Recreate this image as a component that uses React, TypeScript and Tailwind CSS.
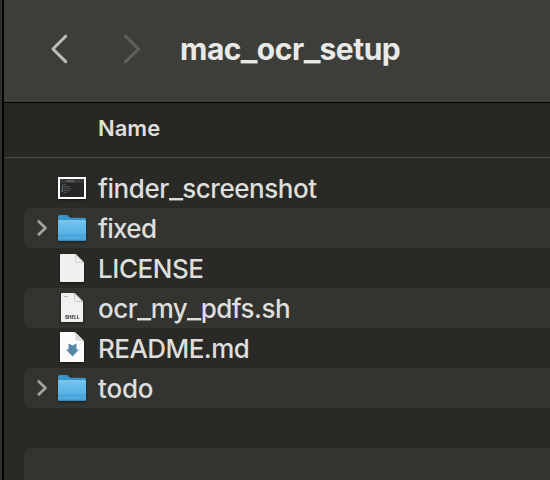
import { Fragment, type ReactNode } from "react";

function Chevron({ direction }: { direction: "left" | "right" }) {
  return (
    <svg width="20" height="32" viewBox="0 0 20 32" fill="none" strokeWidth="3" strokeLinecap="round" strokeLinejoin="round" className={direction === "left" ? "text-[#bcbdb9]" : "text-[#5f605b]"} stroke="currentColor">
      {direction === "left" ? <path d="M15.700 3.200 2.900 16l12.800 12.600" /> : <path d="M4.600 3.200 17.600 16 4.600 28.600" />}
    </svg>
  );
}

function Disclosure() {
  return (
    <svg width="12" height="18" viewBox="0 0 12 18" fill="none" stroke="#a3a39f" strokeWidth="2.7" strokeLinecap="round" strokeLinejoin="round" className="mb-px">
      <path d="M2.700 2.400 9.500 8.900 2.700 15.400" />
    </svg>
  );
}

function ThumbnailIcon() {
  return (
    <svg width="32" height="32" viewBox="0 0 32 32" className="drop-shadow-[0_1px_1px_rgba(0,0,0,0.5)]">
      <rect x="2" y="5" width="28" height="22" fill="#fff" />
      <rect x="4" y="7" width="24" height="18" fill="#252625" />
      <rect x="4" y="7" width="24" height="4" fill="#373838" />
      <path d="M10.500 9h7.500" stroke="#646565" strokeWidth="1.600" />
      <path d="M7 12.500h3M8 14.500h6M8 16.500h7M8 18.500h6M8 20.500h3" stroke="#4e5050" strokeWidth="1.200" />
      <path d="M6.500 13v7" stroke="#777b7d" strokeWidth="1" />
      <path d="M6.500 14.500v1M6.500 19v1" stroke="#36759a" strokeWidth="1.500" />
    </svg>
  );
}

function FolderIcon() {
  return (
    <svg width="32" height="32" viewBox="0 0 32 32" className="drop-shadow-[0_1px_1px_rgba(0,0,0,0.4)]">
      <defs>
        <linearGradient id="folderFront" x1="0" y1="0" x2="0" y2="1">
          <stop offset="0" stopColor="#74c5ef" />
          <stop offset="1" stopColor="#4ba7e0" />
        </linearGradient>
      </defs>
      <g transform="translate(0 .8)">
        <path d="M2 4q0-1.800 2-1.800h6.500q1 0 1.700.800l1 1.200q.6.700 1.500.700H28.500q1.500 0 1.500 1.500V12H2Z" fill="#3b93cc" />
        <path d="M2 8.700q0-1.200 1.200-1.200h25.600q1.200 0 1.200 1.200V26.500q0 1.500-1.500 1.500h-25Q2 28 2 26.500Z" fill="url(#folderFront)" />
        <path d="M2.500 8h27" stroke="#8bd2f5" strokeWidth=".7" />
        <path d="M2 22.500h28" stroke="#3d96cf" strokeWidth=".7" />
        <path d="M2.500 27.500h27" stroke="#348bc5" strokeWidth=".8" />
      </g>
    </svg>
  );
}

function DocumentIcon({ kind }: { kind: "plain" | "shell" | "markdown" }) {
  return (
    <svg width="32" height="32" viewBox="0 0 32 32" className="drop-shadow-[0_1px_1px_rgba(0,0,0,0.5)]">
      <defs>
        <linearGradient id="fold" x1="0" y1="1" x2="1" y2="0">
          <stop offset="0" stopColor="#fff" />
          <stop offset="1" stopColor="#c8c8c8" />
        </linearGradient>
      </defs>
      {kind === "plain" && (
        <>
          <path d="M4 3q0-1 1-1h14.500L28 10.500V29q0 1-1 1H5q-1 0-1-1Z" fill="#f0f0f0" />
          <path d="M19.500 2 28 10.500h-7q-1.500 0-1.500-1.500Z" fill="url(#fold)" stroke="#b8b8b8" strokeWidth=".6" />
        </>
      )}
      {kind === "shell" && (
        <>
          <path d="M5 2q0-1 1-1h12.500L27 9.500V29q0 1-1 1H6q-1 0-1-1Z" fill="#f1f1f1" />
          <path d="M18.500 1 27 9.500h-7q-1.500 0-1.500-1.500Z" fill="url(#fold)" stroke="#b0b0b0" strokeWidth=".6" />
          <path d="M7.500 4.500H12" stroke="#aaa" strokeWidth=".8" />
          <text x="9" y="27" fill="#383838" fontSize="4.300" fontWeight="800" fontFamily="Inter, sans-serif" textLength="14.500" lengthAdjust="spacingAndGlyphs">SHELL</text>
        </>
      )}
      {kind === "markdown" && (
        <>
          <path d="M4 0h13.500q1.500 0 2.500 1l6.500 6.500Q28 9 28 10.500V30H4Z" fill="#fcfcfc" />
          <path d="M17.500 0q2 1.500 2 4.500v2.500q0 1.500 1.500 1.500h3q3 0 4 2V9l-8-8Q19 0 17.500 0Z" fill="#d8d8d8" />
          <path d="m12.500 11.500 4 2 4-2V17.500h2.500l-6.500 7L10 17.500h2.500Z" fill="#5388a7" />
        </>
      )}
    </svg>
  );
}

// Splits a file name so that its underscores can be drawn wider than the font's own.
function FileName({ name }: { name: string }) {
  return name.split("_").map((part, index) => (
    <Fragment key={index}>
      {index > 0 && <span className="mx-[0.035em] inline-block scale-x-[1.18]">_</span>}
      {part}
    </Fragment>
  ));
}

function Row({ name, icon, striped, folder, tracking }: { name: string; icon: ReactNode; striped?: boolean; folder?: boolean; tracking: string }) {
  return (
    <div className={`ml-5 flex h-10 items-center rounded-l-[9px] ${striped ? "bg-[#333430]" : ""}`}>
      <span className="flex w-8 shrink-0 justify-end pr-2">{folder && <Disclosure />}</span>
      <span className="h-8 w-8 shrink-0">{icon}</span>
      <span className={`ml-[10px] pt-px text-[26px] leading-none font-[450] whitespace-nowrap ${tracking}`}><FileName name={name} /></span>
    </div>
  );
}

export default function App() {
  return (
    <main className="flex h-[480px] w-[550px] overflow-hidden bg-[#30312d] font-['Inter',sans-serif] text-[#dededc]">
      <div className="w-0.5 shrink-0" />
      <section className="min-w-0 flex-1 border-l-2 border-black bg-[#292a26]">
        <header className="flex h-[103px] items-start border-b border-black bg-[#3d3e39] pt-[33px]">
          <span className="ml-[46px]"><Chevron direction="left" /></span>
          <span className="ml-[51px]"><Chevron direction="right" /></span>
          <h1 className="ml-[39px] text-[30px] leading-[32px] font-bold tracking-[-0.5px] whitespace-nowrap text-[#e9e9e7]"><FileName name="mac_ocr_setup" /></h1>
        </header>
        <div className="flex h-[55px] items-center border-b border-[#4b4a47] bg-[#282724] pb-[3px] pl-[94px] text-[22px] font-semibold">Name</div>
        <div className="pt-[10px]">
          <Row name="finder_screenshot" icon={<ThumbnailIcon />} tracking="tracking-[-0.45px]" />
          <Row name="fixed" icon={<FolderIcon />} striped folder tracking="tracking-[-0.7px]" />
          <Row name="LICENSE" icon={<DocumentIcon kind="plain" />} tracking="tracking-[-0.45px]" />
          <Row name="ocr_my_pdfs.sh" icon={<DocumentIcon kind="shell" />} striped tracking="tracking-[-0.5px]" />
          <Row name="README.md" icon={<DocumentIcon kind="markdown" />} tracking="tracking-[-0.55px]" />
          <Row name="todo" icon={<FolderIcon />} striped folder tracking="tracking-[-0.2px]" />
          <div className="mt-10 ml-5 h-10 rounded-tl-[9px] bg-[#333430]" />
        </div>
      </section>
    </main>
  );
}
